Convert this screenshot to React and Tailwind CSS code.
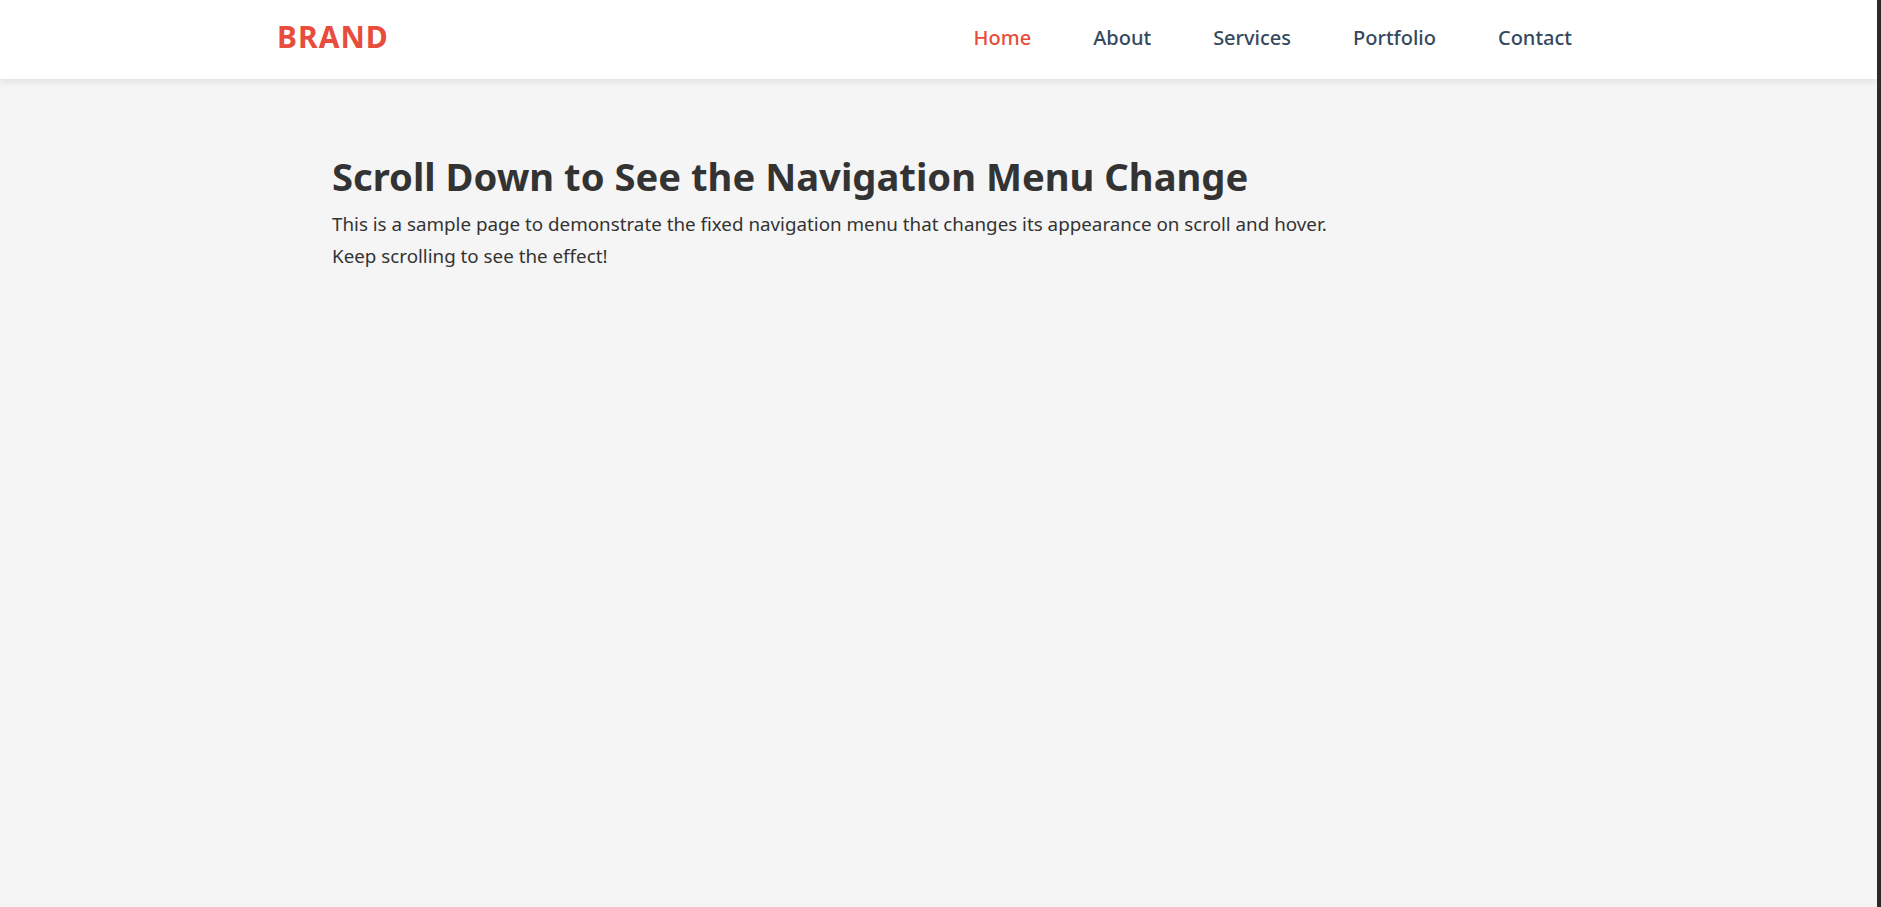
const links = ['Home', 'About', 'Services', 'Portfolio', 'Contact'];

export default function App() {
  return (
    <div className="flex min-h-[907px] w-full bg-[#f5f5f5] font-['Segoe_UI','Noto_Sans',sans-serif]">
      <div className="flex-1 flex flex-col">
        {/* fixed nav, white state */}
        <header className="h-[79px] pb-[4px] bg-white shadow-[0_2px_8px_rgba(0,0,0,0.1)] flex items-center justify-between pl-[277px] pr-[305px]">
          <a className="text-[30px] font-bold tracking-[1px] text-[#e74c3c] leading-none -mt-[2px]">BRAND</a>
          <nav className="flex gap-[62px]">
            {links.map((l, i) => (
              <a
                key={l}
                className={`text-[20px] font-medium leading-none ${i === 0 ? 'text-[#e74c3c]' : 'text-[#34495e]'}`}
              >
                {l}
              </a>
            ))}
          </nav>
        </header>

        <main className="pl-[332px] pt-[74px]">
          <h1 className="text-[38.2px] font-bold text-[#333] leading-[47px]">
            Scroll Down to See the Navigation Menu Change
          </h1>
          <p className="mt-[9px] text-[18.8px] text-[#333] leading-[31.6px]">
            This is a sample page to demonstrate the fixed navigation menu that changes its appearance on scroll and hover.
            <br />
            Keep scrolling to see the effect!
          </p>
        </main>
      </div>
      {/* browser scrollbar strip */}
      <div className="w-[4px] bg-[#2b2b2b]" />
    </div>
  );
}
